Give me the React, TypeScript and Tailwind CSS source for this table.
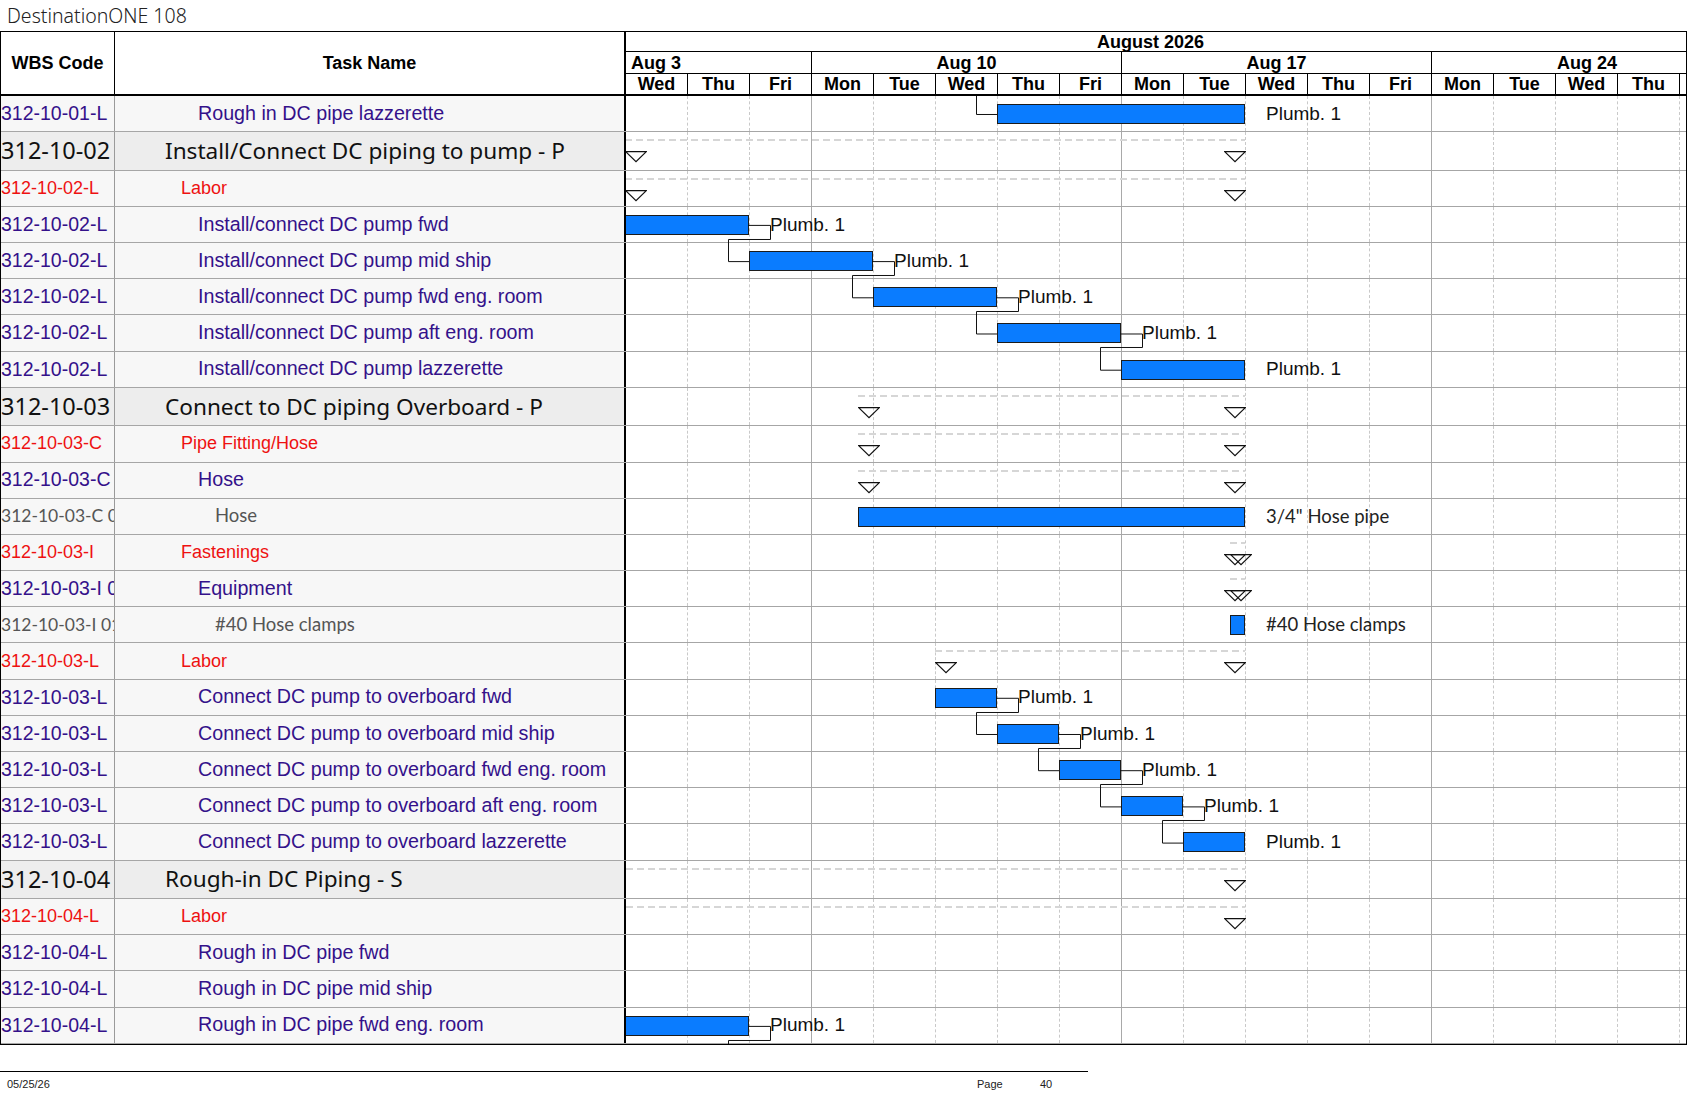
import React from "react";

type Kind = "summary" | "group" | "task" | "item";

type Row = {
  wbs: string;
  name: string;
  kind: Kind;
  bar?: [number, number];
  span?: [number | null, number];
  label?: string;
  link?: boolean;
  linkIn?: boolean;
};

const DAY = 62;
const CHART_W = 1060;
const px = (d: number) => d * DAY - 1;

const rows: Row[] = [
  { wbs: "312-10-01-L", name: "Rough in DC pipe lazzerette", kind: "task", bar: [6, 10], label: "Plumb. 1", linkIn: true },
  { wbs: "312-10-02", name: "Install/Connect DC piping to pump - P", kind: "summary", span: [0, 10] },
  { wbs: "312-10-02-L", name: "Labor", kind: "group", span: [0, 10] },
  { wbs: "312-10-02-L", name: "Install/connect DC pump fwd", kind: "task", bar: [0, 2], label: "Plumb. 1", link: true },
  { wbs: "312-10-02-L", name: "Install/connect DC pump mid ship", kind: "task", bar: [2, 4], label: "Plumb. 1", link: true },
  { wbs: "312-10-02-L", name: "Install/connect DC pump fwd eng. room", kind: "task", bar: [4, 6], label: "Plumb. 1", link: true },
  { wbs: "312-10-02-L", name: "Install/connect DC pump aft eng. room", kind: "task", bar: [6, 8], label: "Plumb. 1", link: true },
  { wbs: "312-10-02-L", name: "Install/connect DC pump lazzerette", kind: "task", bar: [8, 10], label: "Plumb. 1" },
  { wbs: "312-10-03", name: "Connect to DC piping Overboard - P", kind: "summary", span: [3.75, 10] },
  { wbs: "312-10-03-C", name: "Pipe Fitting/Hose", kind: "group", span: [3.75, 10] },
  { wbs: "312-10-03-C", name: "Hose", kind: "task", span: [3.75, 10] },
  { wbs: "312-10-03-C 01", name: "Hose", kind: "item", bar: [3.75, 10], label: "3/4\" Hose pipe" },
  { wbs: "312-10-03-I", name: "Fastenings", kind: "group", span: [9.75, 10] },
  { wbs: "312-10-03-I 01", name: "Equipment", kind: "task", span: [9.75, 10] },
  { wbs: "312-10-03-I 01", name: "#40 Hose clamps", kind: "item", bar: [9.75, 10], label: "#40 Hose clamps" },
  { wbs: "312-10-03-L", name: "Labor", kind: "group", span: [5, 10] },
  { wbs: "312-10-03-L", name: "Connect DC pump to overboard fwd", kind: "task", bar: [5, 6], label: "Plumb. 1", link: true },
  { wbs: "312-10-03-L", name: "Connect DC pump to overboard mid ship", kind: "task", bar: [6, 7], label: "Plumb. 1", link: true },
  { wbs: "312-10-03-L", name: "Connect DC pump to overboard fwd eng. room", kind: "task", bar: [7, 8], label: "Plumb. 1", link: true },
  { wbs: "312-10-03-L", name: "Connect DC pump to overboard aft eng. room", kind: "task", bar: [8, 9], label: "Plumb. 1", link: true },
  { wbs: "312-10-03-L", name: "Connect DC pump to overboard lazzerette", kind: "task", bar: [9, 10], label: "Plumb. 1" },
  { wbs: "312-10-04", name: "Rough-in DC Piping - S", kind: "summary", span: [null, 10] },
  { wbs: "312-10-04-L", name: "Labor", kind: "group", span: [null, 10] },
  { wbs: "312-10-04-L", name: "Rough in DC pipe fwd", kind: "task" },
  { wbs: "312-10-04-L", name: "Rough in DC pipe mid ship", kind: "task" },
  { wbs: "312-10-04-L", name: "Rough in DC pipe fwd eng. room", kind: "task", bar: [0, 2], label: "Plumb. 1", link: true },
];

const days = ["Wed", "Thu", "Fri", "Mon", "Tue", "Wed", "Thu", "Fri", "Mon", "Tue", "Wed", "Thu", "Fri", "Mon", "Tue", "Wed", "Thu"];
const weekEnds = [2, 7, 12];

const heights = rows.map((r) => (r.kind === "summary" ? 38.5 : 36.2));
const tops = heights.map((_, i) => heights.slice(0, i).reduce((a, b) => a + b, 0));
const bodyH = heights.reduce((a, b) => a + b, 0);

const wbsStyle: Record<Kind, string> = {
  summary: "font-['Noto_Sans',sans-serif] text-[23.5px] text-[#111]",
  group: "font-['Liberation_Sans',Arial,sans-serif] text-[18px] text-[#ee1111]",
  task: "font-['Liberation_Sans',Arial,sans-serif] text-[19.5px] text-[#34118a]",
  item: "font-['Lato',sans-serif] text-[17.5px] text-[#555]",
};

const nameStyle: Record<Kind, string> = {
  summary: "pl-[50px] font-['Noto_Sans',sans-serif] text-[22.6px] text-[#111]",
  group: "pl-[66px] font-['Liberation_Sans',Arial,sans-serif] text-[18px] text-[#ee1111]",
  task: "pl-[83px] font-['Liberation_Sans',Arial,sans-serif] text-[19.7px] text-[#34118a]",
  item: "pl-[100px] font-['Lato',sans-serif] text-[18.5px] text-[#555]",
};

const Tri = ({ left }: { left: number }) => (
  <svg className="absolute top-[19px]" style={{ left }} width="22" height="12" viewBox="0 0 22 12">
    <path d="M0.7 0.7 H21.3 L11 10.6 Z" fill="none" stroke="#111" strokeWidth="1.2" />
  </svg>
);

const DayGrid = () => (
  <div className="flex h-full">
    {days.map((d, i) =>
      weekEnds.includes(i) ? (
        <div key={i} className="w-[62px] shrink-0 h-full border-r border-solid border-[#a9a9a9]" />
      ) : (
        <div key={i} className="w-[62px] shrink-0 h-full border-r border-dashed border-[#c9c9c9]" />
      )
    )}
    <div className="w-[6px] shrink-0 h-full" />
  </div>
);

const ChartCell = ({ row }: { row: Row }) => {
  const span = row.span;
  const bar = row.bar;
  return (
    <div className="relative w-[1060px] shrink-0 h-full overflow-hidden bg-white">
      <DayGrid />
      {span && (
        <>
          <div
            className="absolute top-[7px] h-[2px] bg-[repeating-linear-gradient(90deg,#d6d6d6_0_7px,transparent_7px_11px)]"
            style={{ left: span[0] === null ? 0 : px(span[0]), width: px(span[1]) - (span[0] === null ? 0 : px(span[0])) }}
          />
          {span[0] !== null && <Tri left={px(span[0])} />}
          <Tri left={px(span[1]) - 21} />
        </>
      )}
      {bar && (
        <div
          className="absolute top-[8px] h-[20px] bg-[#0a7cff] border border-[#1c1c1c]"
          style={{ left: px(bar[0]), width: (bar[1] - bar[0]) * DAY }}
        />
      )}
      {bar && row.label && (
        <div
          className={
            row.kind === "item"
              ? "absolute top-[8px] h-[20px] flex items-center whitespace-nowrap font-['Lato',sans-serif] text-[18.5px] text-[#222]"
              : "absolute top-[8px] h-[20px] flex items-center whitespace-nowrap font-['Liberation_Sans',Arial,sans-serif] text-[19px] text-[#111]"
          }
          style={{ left: bar[1] * DAY + 20 }}
        >
          {row.label}
        </div>
      )}
    </div>
  );
};

const Links = () => {
  const paths: string[] = [];
  rows.forEach((r, i) => {
    if (!r.bar) return;
    const cy = tops[i] + 18.5;
    if (r.linkIn) {
      const s = px(r.bar[0]);
      paths.push(`M${s - 20.5} -4 V${cy} H${s}`);
    }
    if (r.link) {
      const e = px(r.bar[1]) - 1;
      const next = rows[i + 1];
      const ns = next && next.bar ? px(next.bar[0]) : px(r.bar[1]);
      const ncy = next && next.bar ? tops[i + 1] + 18.5 : tops[i] + heights[i] + 18.5;
      const low = Math.round(tops[i] + heights[i] - 4.5) + 0.5;
      const rx = r.bar[1] * DAY + 20.5;
      paths.push(`M${e} ${cy} H${rx} V${low} H${ns - 20.5} V${ncy} H${ns}`);
    }
  });
  return (
    <svg
      className="absolute left-[625px] top-0 pointer-events-none"
      width={CHART_W}
      height={bodyH}
      viewBox={`0 0 ${CHART_W} ${bodyH}`}
    >
      {paths.map((d, i) => (
        <path key={i} d={d} fill="none" stroke="#111" strokeWidth="1" />
      ))}
    </svg>
  );
};

const Header = () => (
  <div className="flex h-[64px] border-b-2 border-black bg-white font-['Liberation_Sans',Arial,sans-serif] font-bold text-[18px] text-black">
    <div className="w-[114px] shrink-0 border-r border-black flex items-center justify-center">WBS Code</div>
    <div className="w-[511px] shrink-0 border-r-2 border-black flex items-center justify-center">Task Name</div>
    <div className="w-[1060px] shrink-0 flex flex-col">
      <div className="h-[20px] border-b border-black flex items-center pl-[471px] leading-none">August 2026</div>
      <div className="h-[22px] border-b border-black flex leading-none">
        <div className="w-[186px] shrink-0 border-r border-black flex items-center pl-[5px]">Aug 3</div>
        <div className="w-[310px] shrink-0 border-r border-black flex items-center justify-center">Aug 10</div>
        <div className="w-[310px] shrink-0 border-r border-black flex items-center justify-center">Aug 17</div>
        <div className="w-[254px] shrink-0 overflow-hidden flex items-center">
          <div className="w-[310px] shrink-0 text-center">Aug 24</div>
        </div>
      </div>
      <div className="h-[20px] flex leading-none">
        {days.map((d, i) => (
          <div key={i} className="w-[62px] shrink-0 border-r border-black flex items-center justify-center">
            {d}
          </div>
        ))}
        <div className="w-[6px] shrink-0" />
      </div>
    </div>
  </div>
);

export default function App() {
  return (
    <div className="w-[1687px] h-[1097px] overflow-hidden bg-white">
      <div className="h-[31px] flex items-center pl-[7px] font-['Noto_Sans',sans-serif] font-light text-[19.5px] text-[#222]">
        DestinationONE 108
      </div>
      <div className="w-[1687px] border border-black">
        <Header />
        <div className="relative">
          {rows.map((r, i) => (
            <div
              key={i}
              className={
                r.kind === "summary"
                  ? "flex h-[38.5px] border-b border-[#a6a6a6] bg-[#ededed] last:border-b-0"
                  : "flex h-[36.2px] border-b border-[#a6a6a6] bg-[#f7f7f7] last:border-b-0"
              }
            >
              <div className={`w-[114px] shrink-0 border-r border-[#9a9a9a] overflow-hidden whitespace-nowrap flex items-center ${wbsStyle[r.kind]}`}>
                {r.wbs}
              </div>
              <div className={`w-[511px] shrink-0 border-r-2 border-black overflow-hidden whitespace-nowrap flex items-center ${nameStyle[r.kind]}`}>
                {r.name}
              </div>
              <ChartCell row={r} />
            </div>
          ))}
          <Links />
        </div>
      </div>
      <div className="mt-[26px] w-[1088px] border-t border-black" />
      <div className="flex mt-[6px] font-['Liberation_Sans',Arial,sans-serif] text-[11px] text-[#222] leading-[13px]">
        <div className="w-[977px] shrink-0 pl-[7px]">05/25/26</div>
        <div className="w-[63px] shrink-0">Page</div>
        <div>40</div>
      </div>
    </div>
  );
}
